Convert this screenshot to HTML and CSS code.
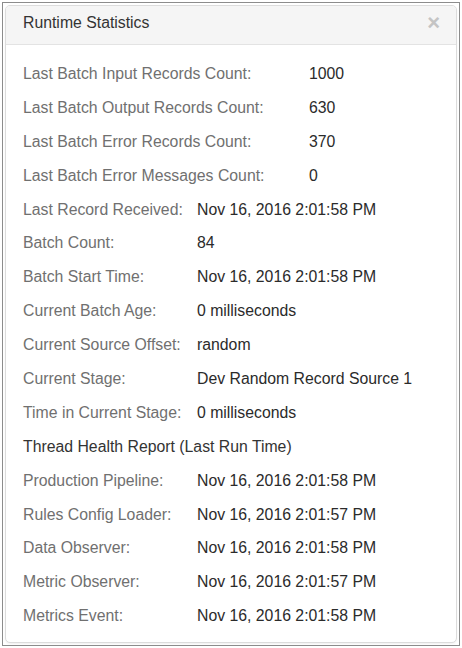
FILE: index.html
```html
<!DOCTYPE html>
<html>
<head>
<meta charset="utf-8">
<link rel="stylesheet" href="styles.css">
</head>
<body>
<div class="frame">
  <div class="modal">
    <div class="modal-header">
      <span class="title">Runtime Statistics</span>
      <span class="close">&times;</span>
    </div>
    <div class="modal-body">
      <div class="stats wide">
        <div class="label">Last Batch Input Records Count:</div><div class="value">1000</div>
        <div class="label">Last Batch Output Records Count:</div><div class="value">630</div>
        <div class="label">Last Batch Error Records Count:</div><div class="value">370</div>
        <div class="label">Last Batch Error Messages Count:</div><div class="value">0</div>
      </div>
      <div class="stats">
        <div class="label">Last Record Received:</div><div class="value">Nov 16, 2016 2:01:58 PM</div>
        <div class="label">Batch Count:</div><div class="value">84</div>
        <div class="label">Batch Start Time:</div><div class="value">Nov 16, 2016 2:01:58 PM</div>
        <div class="label">Current Batch Age:</div><div class="value">0 milliseconds</div>
        <div class="label">Current Source Offset:</div><div class="value">random</div>
        <div class="label">Current Stage:</div><div class="value">Dev Random Record Source 1</div>
        <div class="label">Time in Current Stage:</div><div class="value">0 milliseconds</div>
      </div>
      <div class="section">Thread Health Report (Last Run Time)</div>
      <div class="stats">
        <div class="label">Production Pipeline:</div><div class="value">Nov 16, 2016 2:01:58 PM</div>
        <div class="label">Rules Config Loader:</div><div class="value">Nov 16, 2016 2:01:57 PM</div>
        <div class="label">Data Observer:</div><div class="value">Nov 16, 2016 2:01:58 PM</div>
        <div class="label">Metric Observer:</div><div class="value">Nov 16, 2016 2:01:57 PM</div>
        <div class="label">Metrics Event:</div><div class="value">Nov 16, 2016 2:01:58 PM</div>
      </div>
    </div>
  </div>
</div>
</body>
</html>
```

FILE: styles.css
```css
html, body {
  margin: 0;
  padding: 0;
  background: #ffffff;
}
body {
  padding: 2px;
  font-family: "Liberation Sans", Arial, Helvetica, sans-serif;
  font-size: 15.8px;
  color: #333333;
}
.frame {
  border: 1px solid #8c8c8c;
  width: 458px;
  height: 644px;
  box-sizing: border-box;
  padding: 2px;
}
.modal {
  border: 1px solid #dcdcdc;
  border-radius: 5px;
  height: 638px;
  box-sizing: border-box;
  background: #ffffff;
  box-shadow: 0 1px 2px rgba(0,0,0,0.06);
  overflow: hidden;
}
.modal-header {
  height: 39px;
  box-sizing: border-box;
  background: #f5f5f5;
  border-bottom: 1px solid #e3e3e3;
  display: flex;
  align-items: center;
  justify-content: space-between;
  padding: 0 16px 5px 17px;
}
.title {
  font-size: 15.8px;
  color: #333333;
}
.close {
  font-size: 22px;
  font-weight: bold;
  color: #c4c4c4;
  line-height: 1;
}
.modal-body {
  padding: 12px 17px 0 17px;
}
.stats {
  display: grid;
  grid-template-columns: 174px 1fr;
  grid-auto-rows: 33.9px;
  align-items: center;
}
.stats.wide {
  grid-template-columns: 286px 1fr;
}
.label {
  color: #707070;
  white-space: nowrap;
}
.value {
  color: #2b2b2b;
  white-space: nowrap;
}
.section {
  height: 33.9px;
  display: flex;
  align-items: center;
  color: #333333;
}
```
